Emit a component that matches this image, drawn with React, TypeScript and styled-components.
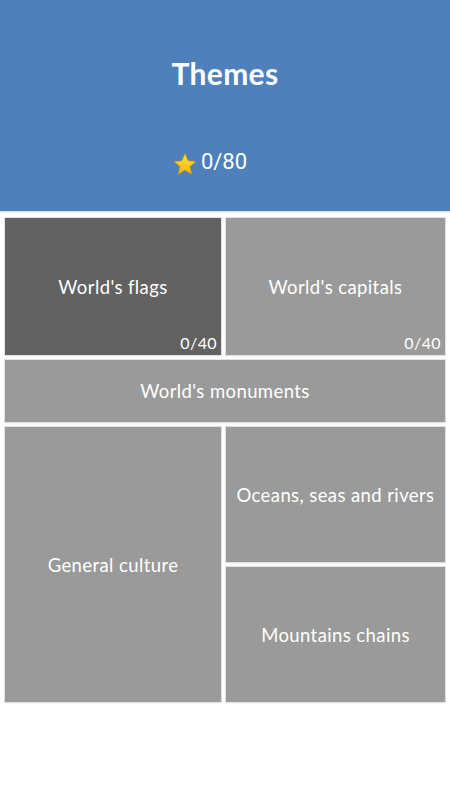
import React from "react";
import styled, { createGlobalStyle } from "styled-components";

const Global = createGlobalStyle`
  html, body { margin: 0; padding: 0; background: #ffffff; }
  body { font-family: "Lato", "Noto Sans", sans-serif; }
`;

const Page = styled.div`
  width: 450px;
  height: 800px;
  background: #ffffff;
  display: flex;
  flex-direction: column;
`;

const Header = styled.header`
  height: 211px;
  background: #4e80bc;
  box-shadow: 0 1px 2px rgba(0, 0, 0, 0.18);
  display: flex;
  flex-direction: column;
  align-items: center;
  position: relative;
  z-index: 1;
`;

const Title = styled.h1`
  margin: 53px 0 0;
  font-family: "Lato", sans-serif;
  font-weight: 700;
  font-size: 30px;
  line-height: 40px;
  color: #ffffff;
  letter-spacing: 0.3px;
`;

const Score = styled.div`
  margin-top: 54px;
  margin-right: 30px;
  display: flex;
  align-items: center;
  gap: 4px;
  color: #ffffff;
  font-family: "Roboto", "Noto Sans", sans-serif;
  font-size: 22px;
  line-height: 26px;
`;

const StarIcon = styled.svg`
  width: 24px;
  height: 24px;
  margin-top: 5px;
`;

const Grid = styled.main`
  padding: 7px 5px 0;
  display: grid;
  grid-template-columns: 216px 219px;
  grid-template-rows: 137px 62px 135px 135px;
  column-gap: 5px;
  row-gap: 5px;
`;

const Tile = styled.div<{ $dark?: boolean; $col: string; $row: string }>`
  grid-column: ${(p) => p.$col};
  grid-row: ${(p) => p.$row};
  background: ${(p) => (p.$dark ? "#626262" : "#9a9a9a")};
  box-shadow: 0 0 0 1px #e2e2e2, 0 1px 2px rgba(0, 0, 0, 0.12);
  position: relative;
  display: flex;
  align-items: center;
  justify-content: center;
  color: #ffffff;
  font-family: "Lato", "Noto Sans", sans-serif;
  font-size: 18.5px;
  letter-spacing: 0.4px;
`;

const Count = styled.span`
  position: absolute;
  right: 4px;
  bottom: 3px;
  font-size: 16px;
  color: #ffffff;
`;

const Star = () => (
  <StarIcon viewBox="0 0 24 24">
    <defs>
      <linearGradient id="sg" x1="0" y1="0" x2="0" y2="1">
        <stop offset="0" stopColor="#ffe34a" />
        <stop offset="1" stopColor="#f2b600" />
      </linearGradient>
    </defs>
    <path
      d="M12 1.5l3.1 7.3 7.9.6-6 5.2 1.9 7.7L12 18.2l-6.9 4.1L7 14.6 1 9.4l7.9-.6z"
      fill="url(#sg)"
      stroke="#c98f00"
      strokeWidth="0.6"
    />
  </StarIcon>
);

export default function App() {
  return (
    <Page>
      <Global />
      <Header>
        <Title>Themes</Title>
        <Score>
          <Star />
          <span>0/80</span>
        </Score>
      </Header>
      <Grid>
        <Tile $dark $col="1" $row="1">
          World's flags
          <Count>0/40</Count>
        </Tile>
        <Tile $col="2" $row="1">
          World's capitals
          <Count>0/40</Count>
        </Tile>
        <Tile $col="1 / span 2" $row="2">
          World's monuments
        </Tile>
        <Tile $col="1" $row="3 / span 2">
          General culture
        </Tile>
        <Tile $col="2" $row="3">
          Oceans, seas and rivers
        </Tile>
        <Tile $col="2" $row="4">
          Mountains chains
        </Tile>
      </Grid>
    </Page>
  );
}
